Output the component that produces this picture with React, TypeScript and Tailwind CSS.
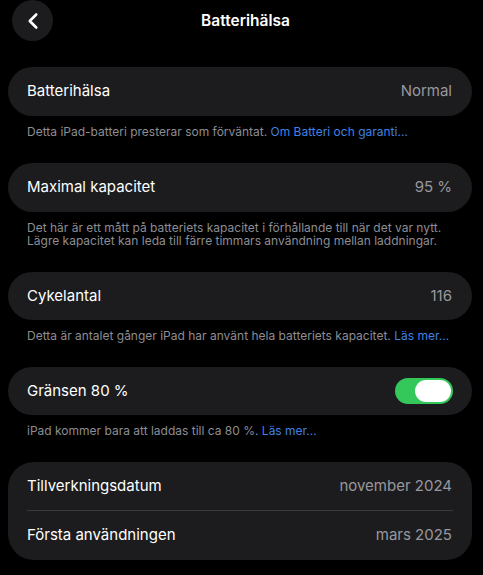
import { ChevronLeft } from "lucide-react"

type Row = { label: string; value: string }

function Card({ children, className = "" }: { children: React.ReactNode; className?: string }) {
  return <div className={`ml-[8px] mr-[11px] bg-[#1c1c1e] ${className}`}>{children}</div>
}

function Footer({ children }: { children: React.ReactNode }) {
  return (
    <p className="px-[27px] pt-[9px] text-[12px] leading-[13.5px] text-[#8d8d93]">
      {children}
    </p>
  )
}

function Link({ children }: { children: React.ReactNode }) {
  return <span className="text-[#3f82e4]">{children}</span>
}

function ValueRow({ label, value }: Row) {
  return (
    <div className="flex h-[48.5px] items-center justify-between pl-[19px] pr-[20px]">
      <span className="text-[15px] text-white">{label}</span>
      <span className="text-[15px] text-[#98989e]">{value}</span>
    </div>
  )
}

export default function App() {
  const dates: Row[] = [
    { label: "Tillverkningsdatum", value: "november 2024" },
    { label: "Första användningen", value: "mars 2025" },
  ]

  return (
    <div className="h-[575px] w-[483px] overflow-hidden bg-black font-['Inter',sans-serif] antialiased">
      {/* Header */}
      <header className="relative flex h-[41px] items-center justify-center">
        <button className="absolute left-[12px] top-0 flex h-[41px] w-[41px] items-center justify-center rounded-full bg-[#1c1c1e]">
          <ChevronLeft className="h-[26px] w-[26px] text-white" strokeWidth={2.4} />
        </button>
        <h1 className="pl-[8px] text-[15.5px] font-semibold text-white">Batterihälsa</h1>
      </header>

      <main className="pt-[26px]">
        <Card className="rounded-full">
          <ValueRow label="Batterihälsa" value="Normal" />
        </Card>
        <Footer>
          Detta iPad-batteri presterar som förväntat. <Link>Om Batteri och garanti…</Link>
        </Footer>

        <Card className="mt-[25px] rounded-full">
          <ValueRow label="Maximal kapacitet" value="95 %" />
        </Card>
        <Footer>
          Det här är ett mått på batteriets kapacitet i förhållande till när det var nytt.
          <br />
          Lägre kapacitet kan leda till färre timmars användning mellan laddningar.
        </Footer>

        <Card className="mt-[24px] rounded-full">
          <ValueRow label="Cykelantal" value="116" />
        </Card>
        <Footer>
          Detta är antalet gånger iPad har använt hela batteriets kapacitet. <Link>Läs mer…</Link>
        </Footer>

        <Card className="mt-[24px] rounded-full">
          <div className="flex h-[48.5px] items-center justify-between pl-[19px] pr-[19px]">
            <span className="text-[15px] text-white">Gränsen 80 %</span>
            <div className="flex h-[26px] w-[58px] items-center justify-end rounded-full bg-[#34c759] p-[2px]">
              <div className="h-[22px] w-[36px] rounded-full bg-white" />
            </div>
          </div>
        </Card>
        <Footer>
          iPad kommer bara att laddas till ca 80 %. <Link>Läs mer…</Link>
        </Footer>

        <Card className="mt-[24px] rounded-[26px]">
          {dates.map((row, i) => (
            <div key={row.label}>
              {i > 0 && <div className="ml-[19px] mr-[19px] h-px bg-[#3a3a3c]" />}
              <ValueRow {...row} />
            </div>
          ))}
        </Card>
      </main>
    </div>
  )
}
